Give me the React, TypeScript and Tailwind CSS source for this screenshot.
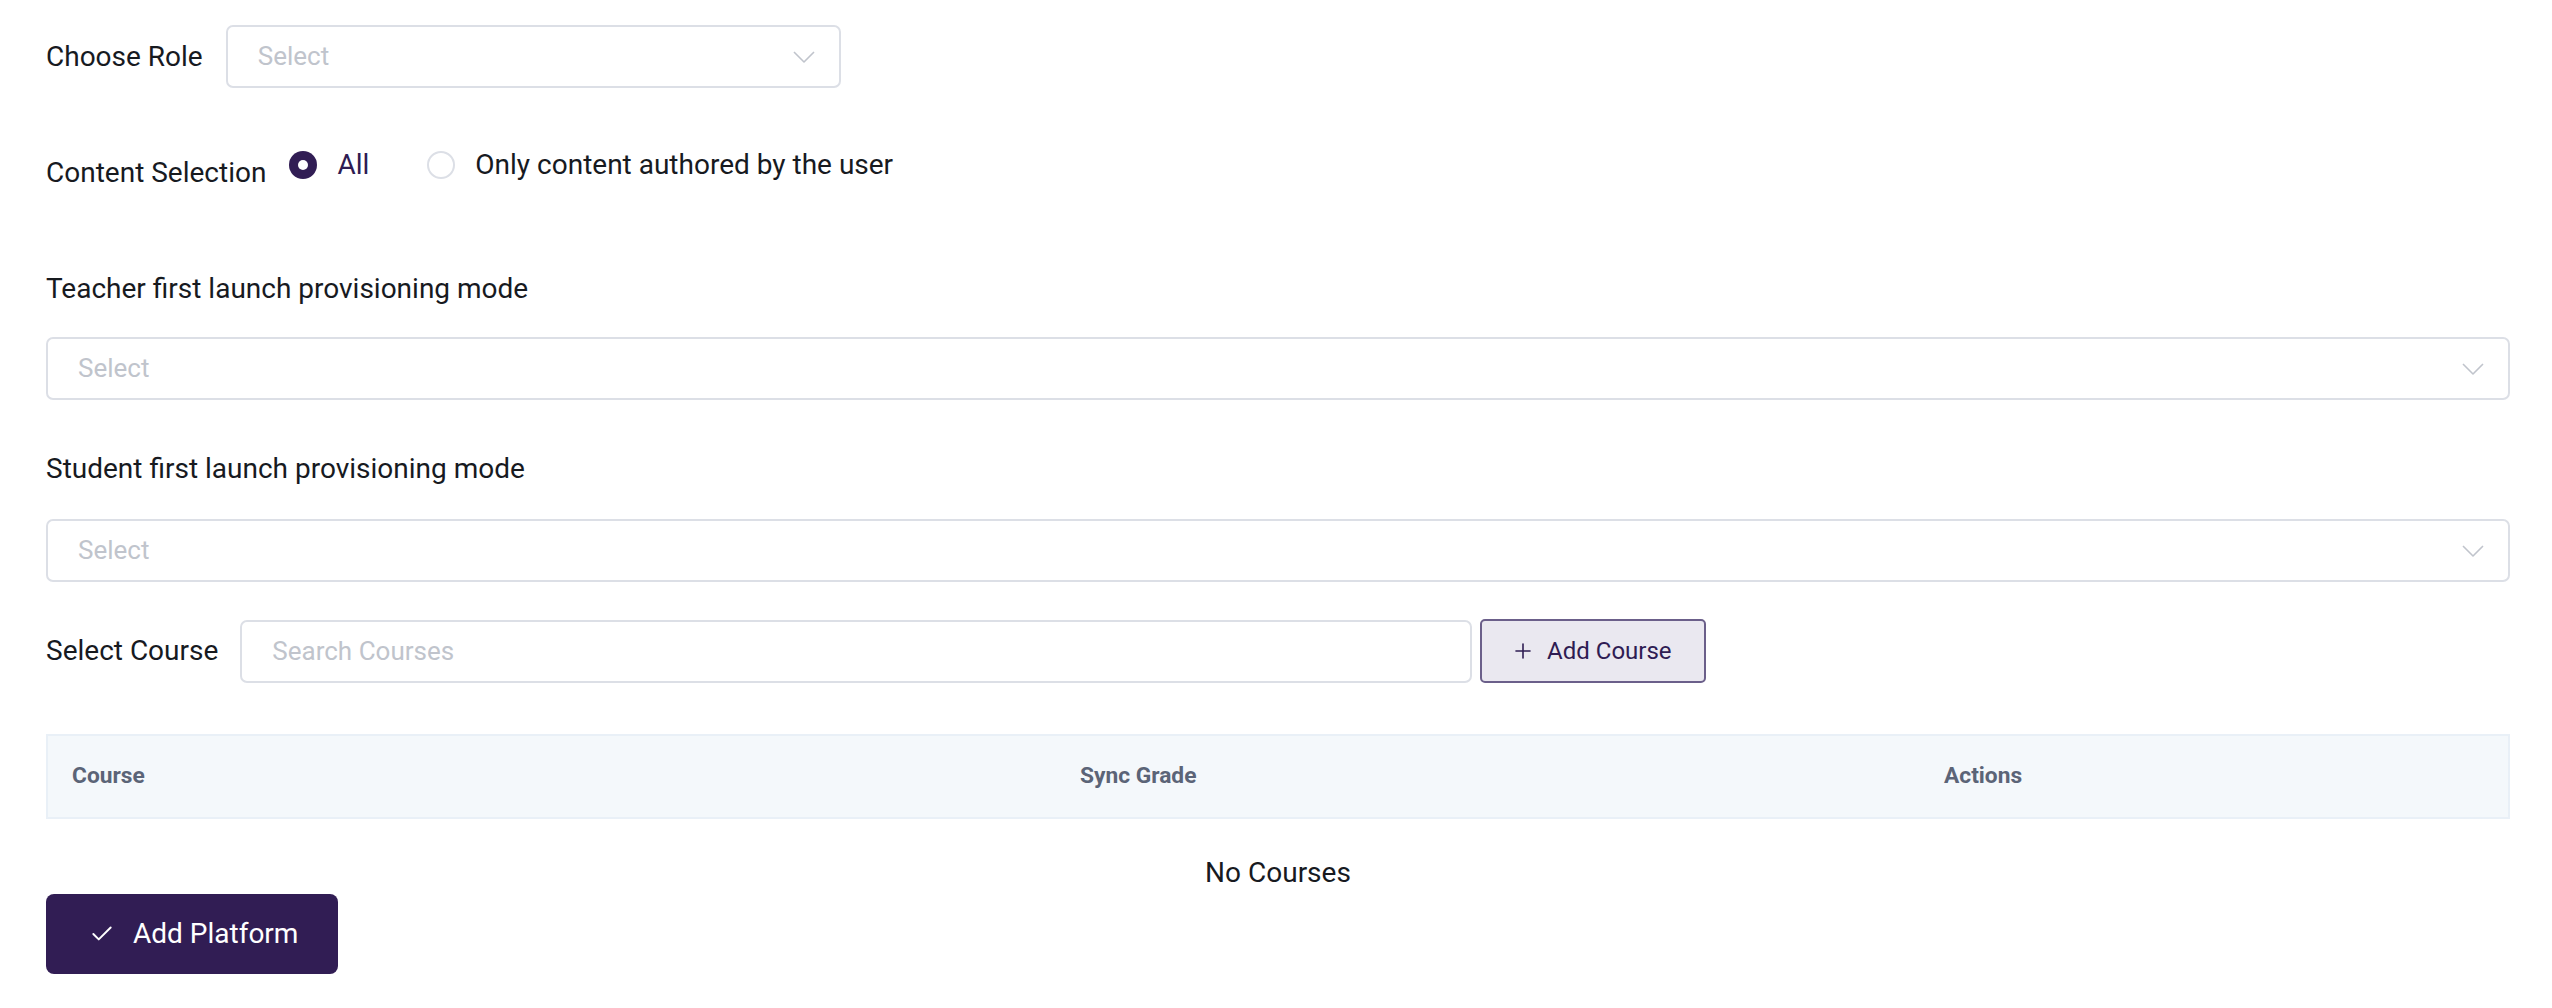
import { Check, Plus } from "lucide-react";

function Chevron() {
  return (
    <svg width="22" height="12" viewBox="0 0 22 12" fill="none" className="shrink-0">
      <polyline points="1,1 11,11 21,1" stroke="#c0c4cc" strokeWidth="1.6" strokeLinejoin="round" />
    </svg>
  );
}

function SelectBox({ className = "" }: { className?: string }) {
  return (
    <div
      className={`h-[63px] flex items-center justify-between rounded-[7px] border-2 border-[#dcdfe6] bg-white pl-[30px] pr-[24px] ${className}`}
    >
      <span className="text-[26px] text-[#c0c4cc]">Select</span>
      <Chevron />
    </div>
  );
}

function Radio({ checked, label }: { checked?: boolean; label: string }) {
  return (
    <label className="flex items-center gap-[20px] cursor-pointer">
      {checked ? (
        <span className="w-[28px] h-[28px] rounded-full bg-[#311d54] flex items-center justify-center">
          <span className="w-[10px] h-[10px] rounded-full bg-white" />
        </span>
      ) : (
        <span className="w-[28px] h-[28px] rounded-full border-2 border-[#dcdfe6] bg-white" />
      )}
      <span className={`text-[28px] leading-[40px] ${checked ? "text-[#2f1c53]" : "text-[#171a1f]"}`}>{label}</span>
    </label>
  );
}

export default function App() {
  return (
    <div
      className="min-h-screen bg-white pl-[46px] pr-[42px] pt-[25px] text-[#171a1f]"
      style={{ fontFamily: "Roboto, 'Liberation Sans', sans-serif" }}
    >
      {/* role */}
      <div className="flex items-center gap-[23px]">
        <span className="text-[28px] leading-[40px]">Choose Role</span>
        <SelectBox className="w-[615px]" />
      </div>

      {/* content selection */}
      <div className="mt-[57px] flex items-start">
        <span className="text-[28px] leading-[40px] mt-[8px]">Content Selection</span>
        <div className="ml-[23px] flex items-center gap-[58px]">
          <Radio checked label="All" />
          <Radio label="Only content authored by the user" />
        </div>
      </div>

      <p className="mt-[76px] text-[28px] leading-[40px]">Teacher first launch provisioning mode</p>
      <SelectBox className="mt-[28px] w-full" />

      <p className="mt-[49px] text-[28px] leading-[40px]">Student first launch provisioning mode</p>
      <SelectBox className="mt-[30px] w-full" />

      {/* course search */}
      <div className="mt-[37px] flex items-center">
        <span className="text-[28px] leading-[40px]">Select Course</span>
        <div className="ml-[22px] flex-none w-[1232px] h-[63px] flex items-center rounded-[7px] border-2 border-[#dcdfe6] bg-white pl-[30px]">
          <span className="text-[26px] text-[#c0c4cc]">Search Courses</span>
        </div>
        <button className="ml-[8px] w-[226px] h-[64px] flex items-center justify-center gap-[12px] pr-[4px] rounded-[5px] border-2 border-[#6b5f8a] bg-[#eae8f0] text-[#2f1c53]">
          <Plus className="w-[24px] h-[24px]" strokeWidth={1.6} />
          <span className="text-[24px]">Add Course</span>
        </button>
      </div>

      {/* table */}
      <div className="mt-[51px] h-[85px] grid grid-cols-[1009px_864px_1fr] items-center border-2 border-[#e9f0f7] bg-[#f4f8fb] text-[22.75px] font-bold text-[#5b6477]">
        <div className="pl-[24px]">Course</div>
        <div className="pl-[23px]">Sync Grade</div>
        <div className="pl-[23px]">Actions</div>
      </div>
      <p className="mt-[34px] text-center text-[28px] leading-[40px]">No Courses</p>

      <button className="mt-[1px] w-[292px] h-[80px] flex items-center gap-[18px] pl-[43px] rounded-[8px] bg-[#311d54] text-white">
        <Check className="w-[26px] h-[26px]" strokeWidth={1.8} />
        <span className="text-[28px]">Add Platform</span>
      </button>
    </div>
  );
}
